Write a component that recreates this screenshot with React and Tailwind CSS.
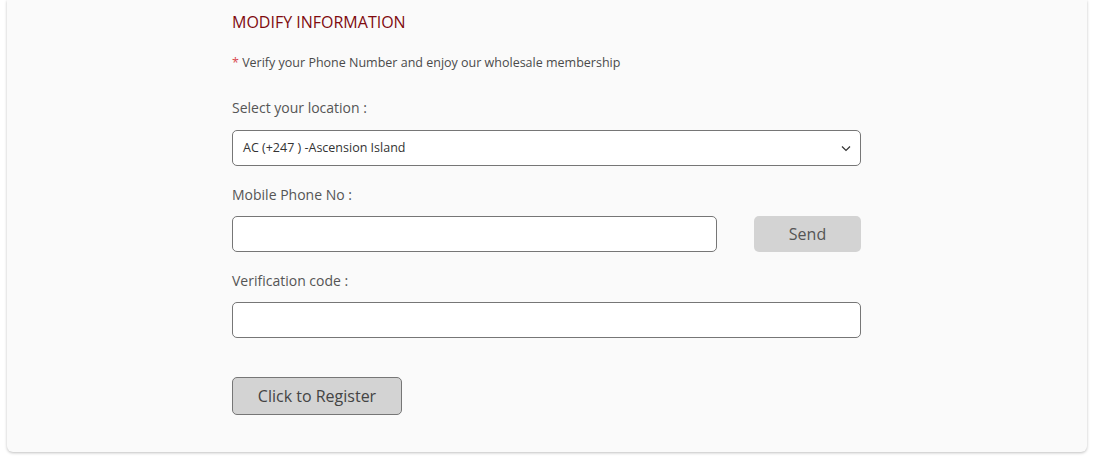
import React from "react";

export default function App() {
  return (
    <div className="min-h-[460px] bg-white" style={{ fontFamily: '"Open Sans", "Noto Sans", sans-serif' }}>
      <div className="mx-[7px] w-[1080px] rounded-b-[6px] bg-[#fafafa] shadow-[0_1px_3px_rgba(0,0,0,0.25)] pt-[11px] pb-[37px] pl-[225px]">
        <div className="w-[629px]">
          <h2 className="text-[16px] leading-[22px] text-[#800a0f]">MODIFY INFORMATION</h2>
          <p className="mt-[22px] text-[12.5px] leading-[16px] text-[#4a4a4a]">
            <span className="text-[#d9484f]">*</span> Verify your Phone Number and enjoy our wholesale membership
          </p>
          <div className="mt-[27px] text-[14px] leading-[20px] text-[#555]">Select your location :</div>
          <div className="relative mt-[12px] h-[36px] rounded-[5px] border border-[#767676] bg-white">
            <div className="flex h-full items-center pl-[10px] text-[12.5px] text-[#333]">AC (+247 ) -Ascension Island</div>
            <svg className="absolute right-[9px] top-[14px]" width="10" height="7" viewBox="0 0 10 7" fill="none">
              <polyline points="1,1.5 5,5.5 9,1.5" stroke="#333" strokeWidth="1.2" />
            </svg>
          </div>
          <div className="mt-[19px] text-[14px] leading-[20px] text-[#555]">Mobile Phone No :</div>
          <div className="mt-[11px] flex items-center justify-between">
            <div className="h-[36px] w-[485px] rounded-[5px] border border-[#767676] bg-white" />
            <button className="h-[36px] w-[107px] rounded-[5px] bg-[#d3d3d3] text-[16px] text-[#555]">Send</button>
          </div>
          <div className="mt-[19px] text-[14px] leading-[20px] text-[#555]">Verification code :</div>
          <div className="mt-[11px] h-[36px] rounded-[5px] border border-[#767676] bg-white" />
          <button className="mt-[39px] h-[38px] w-[170px] rounded-[5px] border border-[#767676] bg-[#d3d3d3] text-[16px] text-[#444]">Click to Register</button>
        </div>
      </div>
    </div>
  );
}
